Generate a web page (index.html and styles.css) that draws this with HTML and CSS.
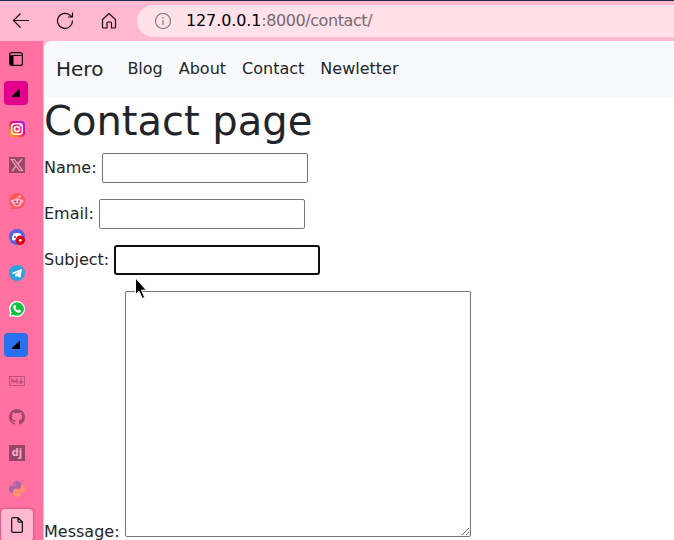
FILE: index.html
```html
<!DOCTYPE html>
<html lang="en">
<head>
<meta charset="utf-8">
<title>Contact</title>
<link rel="stylesheet" href="styles.css">
</head>
<body>
<div class="browser">
  <header class="toolbar">
    <svg class="tool" width="18" height="18" viewBox="0 0 18 18"><path d="M17 8.5H1.5M8.5 1.5l-7 7 7 7"/></svg>
    <svg class="tool" width="18" height="18" viewBox="0 0 18 18"><path d="M16.5 8.5A7.5 7.5 0 1 1 14.5 3.700L16.500 5M16.500.5V5H12"/></svg>
    <svg class="tool" width="18" height="18" viewBox="0 0 18 18"><path d="M2.500 7.500 9 1.500l6.500 6V15q0 1-1 1h-3v-5q0-1-1-1H8q-1 0-1 1v5H3.500q-1 0-1-1z"/></svg>
    <div class="address">
      <svg class="info" width="16" height="16" viewBox="0 0 16 16"><circle cx="8" cy="8" r="7.500"/><path d="M8 7v5M8 4v1.500"/></svg>
      <span class="url"><b>127.0.0.1</b>:8000/contact/</span>
    </div>
  </header>
  <div class="workspace">
    <aside class="tabs">
      <div class="tab first"><svg width="14" height="14" viewBox="0 0 14 14"><rect x=".6" y=".6" width="12.800" height="12.800" rx="2" fill="none" stroke="#111" stroke-width="1.200"/><path d="M1 3.500h12" stroke="#111"/><path d="M1 4h3.500v9H1z"/></svg></div>
      <div class="tab"><div class="tile magenta"><svg width="8" height="8" viewBox="0 0 8 8"><path d="M0 8V7L7 .3q1-.6 1 .6V7q0 1-1 1z"/></svg></div></div>
      <div class="tab"><svg width="16" height="16" viewBox="0 0 16 16"><defs><linearGradient id="ig" x1="0" y1="1" x2="1" y2="0"><stop stop-color="#ffc400"/><stop offset=".3" stop-color="#ff6a20"/><stop offset=".6" stop-color="#f00088"/><stop offset="1" stop-color="#8a2bff"/></linearGradient></defs><rect width="16" height="16" rx="4" fill="url(#ig)"/><g fill="none" stroke="#fff" stroke-width="1.500"><rect x="2.700" y="2.700" width="10.600" height="10.600" rx="3"/><circle cx="8" cy="8" r="2.500"/></g><circle cx="11.200" cy="4.800" r=".7" fill="#fff"/></svg></div>
      <div class="tab"><svg width="16" height="16" viewBox="0 0 16 16"><path fill="#9b4568" d="M0 0h16v16H0z"/><g fill="none" stroke="#f4a2bf" stroke-width="1.200"><path d="M2.500 2.500H5.500l8 11h-3z"/><path d="M13 2 8.700 7M7.200 9 3 14"/></g></svg></div>
      <div class="tab"><svg width="16" height="16" viewBox="0 0 16 16"><path fill="#ff5757" d="M8 0a8 8 0 1 1 0 16H1l1.800-2A8 8 0 0 1 8 0"/><g fill="#ffb3c7"><ellipse cx="8" cy="9.300" rx="5" ry="4.100"/><circle cx="3" cy="8" r="1.500"/><circle cx="13" cy="8" r="1.500"/><circle cx="11" cy="3.500" r="1.200"/></g><path d="M8 5.500q0-2.500 2.500-2" fill="none" stroke="#ffb3c7" stroke-width=".8"/><g fill="#c6385d"><circle cx="6" cy="8.600" r="1"/><circle cx="10" cy="8.600" r="1"/><path d="M5.500 10.500h5Q8 13.500 5.500 10.500"/></g></svg></div>
      <div class="tab"><svg width="16" height="16" viewBox="0 0 16 16"><circle cx="8" cy="8" r="8" fill="#5360ec"/><path d="M4.500 4.500Q8 3.500 11.500 4.500 13.200 7 13 10.500L11 12 10 10.800H6L5 12 3 10.500Q2.800 7 4.500 4.500" fill="#fff"/><ellipse cx="6" cy="8" rx="1" ry="1.200" fill="#5360ec"/><circle cx="11.300" cy="11.300" r="4.700" fill="#d9000d"/><circle cx="11.300" cy="11.300" r="1.400" fill="#fff"/></svg></div>
      <div class="tab"><svg width="16" height="16" viewBox="0 0 16 16"><circle cx="8" cy="8" r="8" fill="#2ca2dc"/><path d="m2.500 8 10-4q.6-.2.500.5l-1.500 7.800q-.2.700-.8.300L8 11l-1.500 1.300-.4-2.800L10.500 6 5 9z" fill="#fff"/></svg></div>
      <div class="tab"><svg width="16" height="16" viewBox="0 0 16 16"><path fill="#fff" d="M8 0a8 8 0 1 1-3.500 15.200L0 16l1-4A8 8 0 0 1 8 0"/><path fill="#10c340" d="M8.200 1.300a6.700 6.700 0 1 1-3.500 12.400L1.800 14.400l.8-2.800A6.700 6.700 0 0 1 8.200 1.300"/><path fill="#fff" d="M5 4h1.300l.9 2-.8 1.100q.9 1.600 2.600 2.400l1-1 2.100 1q0 2.300-2.200 2.400Q5.500 11.300 4.300 6.500 4.100 4.800 5 4"/></svg></div>
      <div class="tab"><div class="tile blue"><svg width="8" height="8" viewBox="0 0 8 8"><path d="M0 8V7L7 .3q1-.6 1 .6V7q0 1-1 1z"/></svg></div></div>
      <div class="tab"><svg width="16" height="16" viewBox="0 0 16 16" fill="none" stroke="#bd517a"><rect x=".5" y="3.500" width="15" height="9"/><path d="M3 10.500v-4L5.500 9 8 6.500v4" stroke-width="1.500"/><path d="M12 5.500v4M10 8.500l2 2 2-2" stroke-width="1.300"/></svg></div>
      <div class="tab"><svg width="16" height="16" viewBox="0 0 16 16" fill="#a0486b"><path d="M8 0C3.580 0 0 3.580 0 8c0 3.540 2.290 6.530 5.470 7.590.4.070.55-.17.55-.38 0-.19-.01-.82-.01-1.490-2.010.37-2.530-.49-2.690-.94-.09-.23-.48-.94-.82-1.130-.28-.15-.68-.52-.01-.53.63-.01 1.080.58 1.230.82.72 1.210 1.870.87 2.330.66.07-.52.28-.87.51-1.070-1.780-.2-3.640-.89-3.640-3.950 0-.87.31-1.590.82-2.150-.08-.2-.36-1.020.08-2.120 0 0 .67-.21 2.200.82a7.600 7.600 0 0 1 4 0c1.530-1.040 2.200-.82 2.200-.82.44 1.100.16 1.920.08 2.120.51.560.82 1.270.82 2.150 0 3.070-1.870 3.750-3.650 3.950.29.25.54.730.54 1.480 0 1.070-.01 1.930-.01 2.200 0 .21.15.46.55.38A8 8 0 0 0 16 8c0-4.420-3.580-8-8-8z"/></svg></div>
      <div class="tab"><div class="django">dj</div></div>
      <div class="tab"><svg width="16" height="16" viewBox="0 0 16 16"><path fill="#a565a4" d="M8 0C5 0 4.500 1 4.500 2.200V4H8.200v.7H2.600C1 4.700 0 6 0 8.200s1 3.500 2.500 3.500H4V9.800C4 8.500 5 7.500 6.400 7.500H10c1 0 1.800-.8 1.800-1.800V2.400C11.800 1 10.700 0 8 0"/><path fill="#ff9361" d="M8 16c3 0 3.500-1 3.500-2.200V12H7.800v-.7h5.600C15 11.300 16 10 16 7.800S15 4.300 13.500 4.300H12.400v1.900c0 1.300-1 2.300-2.400 2.300H6c-1 0-1.800.8-1.800 1.800v3.300C4.200 15 5.300 16 8 16"/><circle cx="6.200" cy="2.300" r=".7" fill="#ff71a1"/><circle cx="9.800" cy="13.700" r=".7" fill="#ffb2a0"/></svg></div>
      <div class="tab active"><svg width="12" height="16" viewBox="0 0 12 16" fill="none" stroke="#111" stroke-width="1.200"><path d="M2 .7h5l4.400 4.400V14q0 1.300-1.300 1.300H2Q.7 15.300.7 14V2Q.7.7 2 .7M7 .7v3.400q0 1 1 1h3.400"/></svg></div>
    </aside>
    <main class="page">
      <nav class="navbar"><a class="brand">Hero</a><a>Blog</a><a>About</a><a>Contact</a><a>Newletter</a></nav>
      <h1>Contact page</h1>
      <form>
        <p><label for="name">Name:</label> <input id="name" type="text"></p>
        <p><label for="email">Email:</label> <input id="email" type="text"></p>
        <p><label for="subject">Subject:</label> <input id="subject" class="focused" type="text"></p>
        <p><label for="message">Message:</label> <textarea id="message"></textarea></p>
      </form>
    </main>
  </div>
  <svg class="cursor" width="15" height="24" viewBox="0 0 15 24"><path d="M1.500 1v16.500l3.500-3.300 3.300 7.300 2.400-1.100-3.200-7.200h5z" fill="#000" stroke="#fff"/></svg>
</div>
</body>
</html>
```
FILE: styles.css
```css
* { box-sizing: border-box; }
body {
  margin: 0;
  font: 16px/24px "DejaVu Sans", sans-serif;
  color: #212529;
}
.browser {
  position: relative;
  height: 540px;
  display: flex;
  flex-direction: column;
  overflow: hidden;
  background: #ffb8cf;
}
.toolbar {
  flex: none;
  height: 41px;
  display: flex;
  align-items: center;
  gap: 26px;
  padding-left: 12px;
  border-top: 1px solid #1d2b50;
}
.tool { flex: none; fill: none; stroke: #15090d; stroke-width: 1.2; }
.address {
  flex: 1;
  height: 32px;
  margin-left: -7px;
  padding-left: 18px;
  display: flex;
  align-items: center;
  gap: 15px;
  border-radius: 16px 0 0 16px;
  background: #ffe1ea;
}
.info { fill: none; stroke: #8b7a80; stroke-width: 1.2; }
.url { color: #776a6f; letter-spacing: -.42px; }
.url b { font-weight: normal; color: #000; letter-spacing: -.12px; }
.workspace { flex: 1; min-height: 0; display: flex; background: linear-gradient(90deg, #ff71a1 43px, #ffb8cf 43px); }
.tabs { flex: none; width: 44px; }
.tab {
  width: 33px;
  height: 36px;
  display: flex;
  align-items: center;
  justify-content: center;
  padding-left: 1px;
}
.tab.first { height: 34px; padding: 2px 1px 0 0; }
.tile {
  width: 24px;
  height: 24px;
  border-radius: 4px;
  display: flex;
  align-items: center;
  justify-content: center;
  margin-right: 2px;
}
.magenta { background: #e3008c; }
.blue { background: #2870ed; }
.django {
  width: 16px;
  height: 16px;
  background: #98446a;
  color: #ffb0ca;
  font: bold 11px/14px "Open Sans", sans-serif;
  text-align: center;
}
.active {
  height: 32px;
  width: 32px;
  margin: 2px 0 0 1px;
  padding: 0;
  border-radius: 4px;
  background: #ffb8cf;
  box-shadow: 0 0 3px #a83c66;
}
.page { flex: 1; min-width: 0; background: #fff; border-top-left-radius: 8px; overflow: hidden; }
.navbar {
  height: 56px;
  display: flex;
  align-items: center;
  gap: 16px;
  padding-left: 12px;
  background: #f8f9fa;
}
.brand { font-size: 20px; margin-right: 8px; }
h1 { margin: 0 0 8px; font-size: 40px; font-weight: normal; line-height: 48px; }
p { margin: 0 0 16px; white-space: nowrap; }
input, textarea {
  margin: 0;
  border: 1px solid #767676;
  border-radius: 2px;
  background: #fff;
  font: inherit;
}
input { width: 206px; height: 30px; padding: 0 2px 2px; }
.focused { border: 2px solid #101010; border-radius: 3px; }
textarea { width: 346px; height: 246px; padding: 2px; resize: both; }
.cursor { position: absolute; left: 134px; top: 277px; }
```
